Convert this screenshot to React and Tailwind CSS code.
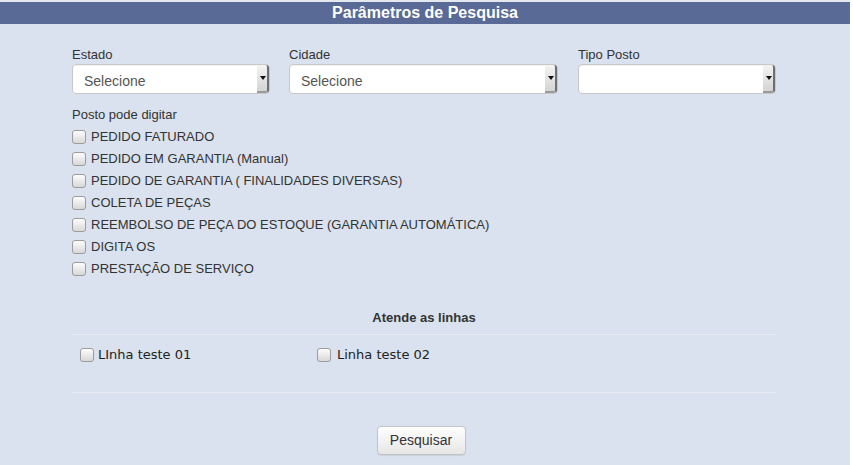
import React from "react";

function Select({ w, text }) {
  return (
    <div
      className="relative h-[30px] rounded-[4px] border border-[#c8c8c8] bg-white shadow-[inset_0_1px_1px_rgba(0,0,0,0.06)]"
      style={{ width: w }}
    >
      <div className="absolute left-[11px] top-[8px] text-[14px] leading-[16px] text-[#555]">{text}</div>
      <div className="absolute right-0 top-0 h-[28px] w-[12px] rounded-r-[3px] border-r-2 border-b-2 border-r-[#6f6f6f] border-b-[#9a9a9a] bg-gradient-to-b from-[#f4f4f4] to-[#d4d4d4] flex items-center justify-center">
        <div className="w-0 h-0 border-l-[3px] border-r-[3px] border-t-[4px] border-l-transparent border-r-transparent border-t-[#111] ml-[1px]" />
      </div>
    </div>
  );
}

function Box() {
  return (
    <div className="w-[14px] h-[14px] rounded-[3px] border border-[#9c9c9c] bg-gradient-to-b from-[#fdfdfd] to-[#d8d8d8] shrink-0" />
  );
}

const items = [
  "PEDIDO FATURADO",
  "PEDIDO EM GARANTIA (Manual)",
  "PEDIDO DE GARANTIA ( FINALIDADES DIVERSAS)",
  "COLETA DE PEÇAS",
  "REEMBOLSO DE PEÇA DO ESTOQUE (GARANTIA AUTOMÁTICA)",
  "DIGITA OS",
  "PRESTAÇÃO DE SERVIÇO",
];

export default function App() {
  return (
    <div className="w-[853px] h-[465px] bg-white overflow-hidden" style={{ fontFamily: '"Liberation Sans", Arial, sans-serif' }}>
      <div className="w-[850px] h-[465px] bg-[#d9e2ee]">
        <div className="h-[2px] bg-[#e4e8ef]" />
        <div className="h-[22px] bg-[#596a97] flex items-center justify-center text-white font-bold text-[16px] leading-[18px]">
          Parâmetros de Pesquisa
        </div>
        <div className="ml-[72px] w-[704px] text-[#333]">
          <div className="flex mt-[23px]">
            <div className="w-[217px]">
              <div className="text-[13px] leading-[15px] h-[17px]">Estado</div>
              <Select w={198} text="Selecione" />
            </div>
            <div className="w-[289px]">
              <div className="text-[13px] leading-[15px] h-[17px]">Cidade</div>
              <Select w={269} text="Selecione" />
            </div>
            <div className="w-[198px]">
              <div className="text-[13px] leading-[15px] h-[17px]">Tipo Posto</div>
              <Select w={198} text="" />
            </div>
          </div>
          <div className="mt-[13px] text-[13px] leading-[15px] h-[19px]">Posto pode digitar</div>
          <div className="flex flex-col">
            {items.map((t) => (
              <div key={t} className="h-[22px] flex items-center gap-[5px] text-[13px]">
                <Box />
                <span>{t}</span>
              </div>
            ))}
          </div>
          <div className="mt-[30px] text-center font-bold text-[13px] leading-[15px]">Atende as linhas</div>
          <div className="mt-[9px] h-px bg-[#e9edf3]" />
          <div className="h-[38px] pt-[2px] flex items-center text-[13px] text-[#222]" style={{ fontFamily: '"DejaVu Sans", sans-serif' }}>
            <div className="w-[245px] pl-[8px] flex items-center gap-[4px]">
              <Box />
              <span>LInha teste 01</span>
            </div>
            <div className="flex items-center gap-[6px]">
              <Box />
              <span>Linha teste 02</span>
            </div>
          </div>
          <div className="mt-[19px] h-px bg-[#e9edf3]" />
          <div className="mt-[33px] flex justify-center">
            <button className="w-[89px] h-[29px] mr-[6px] rounded-[4px] border border-[#c4c4c4] bg-gradient-to-b from-white to-[#e6e6e6] text-[14px] text-[#333] shadow-[0_1px_1px_rgba(0,0,0,0.08)]">
              Pesquisar
            </button>
          </div>
        </div>
      </div>
    </div>
  );
}
